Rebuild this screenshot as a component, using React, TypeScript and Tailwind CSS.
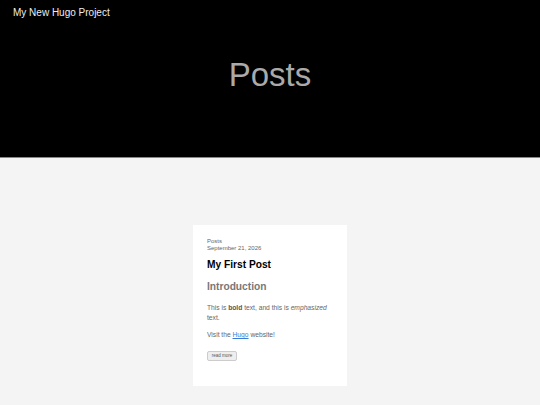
const App = () => {
  return (
    <div className="min-h-[405px] bg-[#f4f4f4] font-['Liberation_Sans',Arial,sans-serif]">
      <header className="h-[158px] bg-black border-b border-[#888] flex flex-col">
        <div className="px-[13px] pt-[6px] text-[10px] leading-[13px] text-[#eee]">
          My New Hugo Project
        </div>
        <h1 className="mt-[37px] text-center text-[33px] leading-[38px] text-[#aaa]">Posts</h1>
      </header>

      <main className="flex justify-center pt-[67px] pb-[19px]">
        <article className="w-[154px] h-[161px] bg-white px-[14px] pt-[13px]">
          <div className="text-[6px] leading-[7px] text-[#666]">Posts</div>
          <div className="text-[6px] leading-[7px] text-[#666]">September 21, 2026</div>
          <h2 className="mt-[6px] text-[10.2px] leading-[14px] font-bold text-black">My First Post</h2>
          <h3 className="mt-[8px] text-[10.2px] leading-[14px] font-bold text-[#777]">Introduction</h3>
          <p className="mt-[9px] text-[6.7px] leading-[10px] text-[#666]">
            This is <b className="text-[#555]">bold</b> text, and this is <em>emphasized</em> text.
          </p>
          <p className="mt-[7px] text-[6.7px] leading-[10px] text-[#666]">
            Visit the <a className="text-[#3a7bd5] underline" href="#">Hugo</a> website!
          </p>
          <button className="mt-[9px] h-[10px] w-[30px] text-[4.5px] leading-[8px] text-[#555] bg-[#eee] border border-[#ccc] rounded-[2px]">
            read more
          </button>
        </article>
      </main>
    </div>
  );
};

export default App;
